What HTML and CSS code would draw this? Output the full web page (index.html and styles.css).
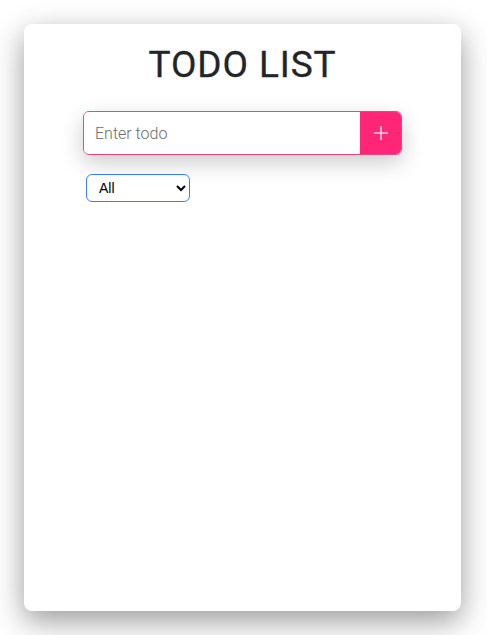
FILE: index.html
```html
<!DOCTYPE html>
<html>
<head>
<meta charset="utf-8">
<link rel="stylesheet" href="styles.css">
</head>
<body>
<div class="card">
  <h1 class="title">TODO LIST</h1>
  <div class="form">
    <div class="input-group">
      <input class="todo-input" type="text" placeholder="Enter todo">
      <button class="add-btn" type="button">
        <svg width="16" height="16" viewBox="0 0 16 16"><path d="M8 1V15M1 8H15" stroke="#ffd3e4" stroke-width="1.6" fill="none"/></svg>
      </button>
    </div>
    <select class="filter">
      <option>All</option>
      <option>Completed</option>
      <option>Uncompleted</option>
    </select>
  </div>
</div>
</body>
</html>
```

FILE: styles.css
```css
* { box-sizing: border-box; }
html, body { margin: 0; padding: 0; background: #fff; }
body { padding: 24px 26px 24px 24px; font-family: Roboto, "Liberation Sans", sans-serif; }
.card {
  width: 437px;
  height: 587px;
  background: #fff;
  border-radius: 8px;
  box-shadow: 0 10px 30px rgba(0,0,0,0.4);
  padding-top: 21px;
  display: flex;
  flex-direction: column;
  align-items: center;
}
.title {
  margin: 0;
  font-family: Roboto, sans-serif;
  font-weight: 400;
  font-size: 37px;
  line-height: 40px;
  letter-spacing: 0.9px;
  color: #212529;
  -webkit-text-stroke: 0.3px #212529;
}
.form {
  margin-top: 26px;
  width: 319px;
  display: flex;
  flex-direction: column;
}
.input-group {
  display: flex;
  height: 44px;
  border: 1px solid #f0437f;
  border-radius: 6px;
  overflow: hidden;
  box-shadow: 0 8px 22px rgba(0,0,0,0.2);
}
.todo-input {
  flex: 1;
  border: 0;
  outline: none;
  padding: 0 11px;
  font-family: Roboto, sans-serif;
  font-weight: 300;
  font-size: 16px;
  color: #333;
  background: #fff;
}
.todo-input::placeholder { color: #6c6c6c; font-weight: 300; }
.add-btn {
  width: 41px;
  border: 0;
  padding: 0;
  background: #ff2677;
  display: flex;
  align-items: center;
  justify-content: center;
}
.filter {
  margin: 19px 0 0 3px;
  width: 104px;
  height: 28px;
  border: 1.5px solid #3b7cff;
  border-radius: 6px;
  outline: none;
  padding: 0 0 0 8px;
  font-family: Arial, "Liberation Sans", sans-serif;
  font-size: 14px;
  color: #000;
  background: #fff;
}
```
